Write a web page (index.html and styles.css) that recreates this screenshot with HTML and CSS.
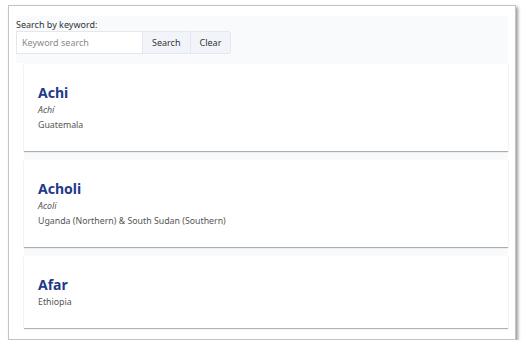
FILE: index.html
```html
<!DOCTYPE html>
<html lang="en">
<head>
    <meta charset="UTF-8">
    <meta name="viewport" content="width=device-width, initial-scale=1.0">
    <title>Languages</title>
    <link rel="stylesheet" href="styles.css">
</head>
<body>

    <div class="window">
        <div class="content">
            <!-- Search -->
            <div class="search-bar">
                <label for="keyword" class="search-label">Search by keyword:</label>
                <div class="search-row">
                    <input type="text" id="keyword" class="search-input" placeholder="Keyword search">
                    <button class="btn">Search</button>
                    <button class="btn btn-last">Clear</button>
                </div>
            </div>

            <!-- Results -->
            <div class="results">
                <div class="card">
                    <h2 class="card-title">Achi</h2>
                    <p class="card-alt">Achí</p>
                    <p class="card-country">Guatemala</p>
                </div>
                <div class="card">
                    <h2 class="card-title">Acholi</h2>
                    <p class="card-alt">Acoli</p>
                    <p class="card-country">Uganda (Northern) &amp; South Sudan (Southern)</p>
                </div>
                <div class="card">
                    <h2 class="card-title">Afar</h2>
                    <p class="card-country">Ethiopia</p>
                </div>
            </div>
        </div>
    </div>

</body>
</html>
```

FILE: styles.css
```css
body {
    font-family: "Noto Sans", "Open Sans", sans-serif;
    background-color: #ffffff;
    margin: 0;
    padding: 0;
}

.window {
    margin: 5px 0 0 8px;
    width: 508px;
    height: 335px;
    background: #ffffff;
    border: 1px solid #c4c4c4;
    box-shadow: 2px 2px 3px rgba(0, 0, 0, 0.4);
    padding: 10px 0 0 7px;
    box-sizing: border-box;
    overflow: hidden;
}

.content {
    width: 492px;
}

/* Search bar */
.search-bar {
    background: #f8fafc;
    padding: 3px 0 9px 0;
}

.search-label {
    display: block;
    font-size: 9px;
    line-height: 12px;
    color: #333333;
}

.search-row {
    display: flex;
    height: 23px;
}

.search-input {
    width: 126px;
    height: 23px;
    box-sizing: border-box;
    border: 1px solid #e5e7eb;
    border-right: none;
    padding: 0 5px;
    font-family: inherit;
    font-size: 9px;
    color: #333333;
    outline: none;
}

.search-input::placeholder {
    color: #8a8a8a;
}

.btn {
    height: 23px;
    box-sizing: border-box;
    background: #f1f5f9;
    border: 1px solid #e2e8f0;
    border-right: none;
    padding: 0 9px;
    font-family: inherit;
    font-size: 9px;
    color: #333333;
    cursor: pointer;
}

.btn-last {
    border-right: 1px solid #e2e8f0;
    border-radius: 0 3px 3px 0;
}

/* Results */
.results {
    margin-left: 8px;
    background: #f8fafc;
    padding-top: 1px;
    display: flex;
    flex-direction: column;
    gap: 9px;
}

.card {
    background: #ffffff;
    padding: 19px 14px 18px 14px;
    box-shadow: 0 1px 1px rgba(0, 0, 0, 0.3);
}

.card-title {
    margin: 0;
    font-size: 14px;
    line-height: 20px;
    font-weight: 700;
    color: #1e3a8a;
}

.card-alt,
.card-country {
    margin: 0;
    font-size: 8.8px;
    line-height: 15px;
    color: #555555;
}

.card-alt {
    font-style: italic;
}
```
